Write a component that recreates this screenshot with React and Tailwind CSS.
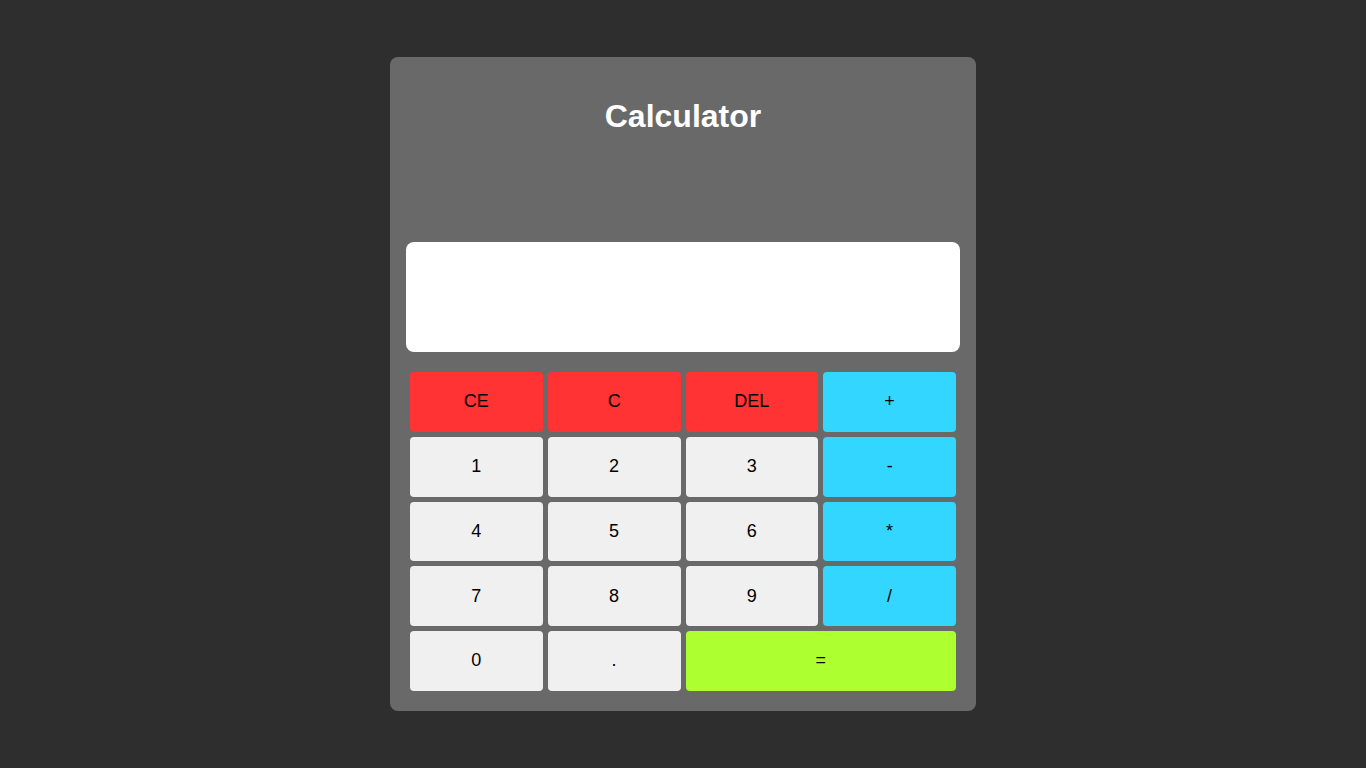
const keys = [
  { label: 'CE', tone: 'red' },
  { label: 'C', tone: 'red' },
  { label: 'DEL', tone: 'red' },
  { label: '+', tone: 'op' },
  { label: '1' },
  { label: '2' },
  { label: '3' },
  { label: '-', tone: 'op' },
  { label: '4' },
  { label: '5' },
  { label: '6' },
  { label: '*', tone: 'op' },
  { label: '7' },
  { label: '8' },
  { label: '9' },
  { label: '/', tone: 'op' },
  { label: '0' },
  { label: '.' },
  { label: '=', tone: 'eq' },
];

function Key({ label, tone }) {
  let cls = 'bg-[#f0f0f0]';
  if (tone === 'red') cls = 'bg-[#ff3333]';
  if (tone === 'op') cls = 'bg-[#33d6ff]';
  if (tone === 'eq') cls = 'bg-[#adff2f] col-span-2';
  return (
    <button
      className={`${cls} h-[59.75px] rounded text-[18px] text-black flex items-center justify-center`}
    >
      {label}
    </button>
  );
}

export default function App() {
  return (
    <div
      className="min-h-screen bg-[#2e2e2e] pt-[57px]"
      style={{ fontFamily: '"Liberation Sans", Arial, sans-serif' }}
    >
      <div className="mx-auto w-[586px] rounded-lg bg-[#696969] px-4 pt-[41px] pb-5">
        <h1 className="h-[37px] text-center text-[32px] font-bold leading-[37px] text-white">
          Calculator
        </h1>
        <div className="mt-[107px] h-[110px] rounded-lg bg-white" />
        <div className="mx-1 mt-5 grid grid-cols-4 gap-[5px]">
          {keys.map((k) => (
            <Key key={k.label} {...k} />
          ))}
        </div>
      </div>
    </div>
  );
}
